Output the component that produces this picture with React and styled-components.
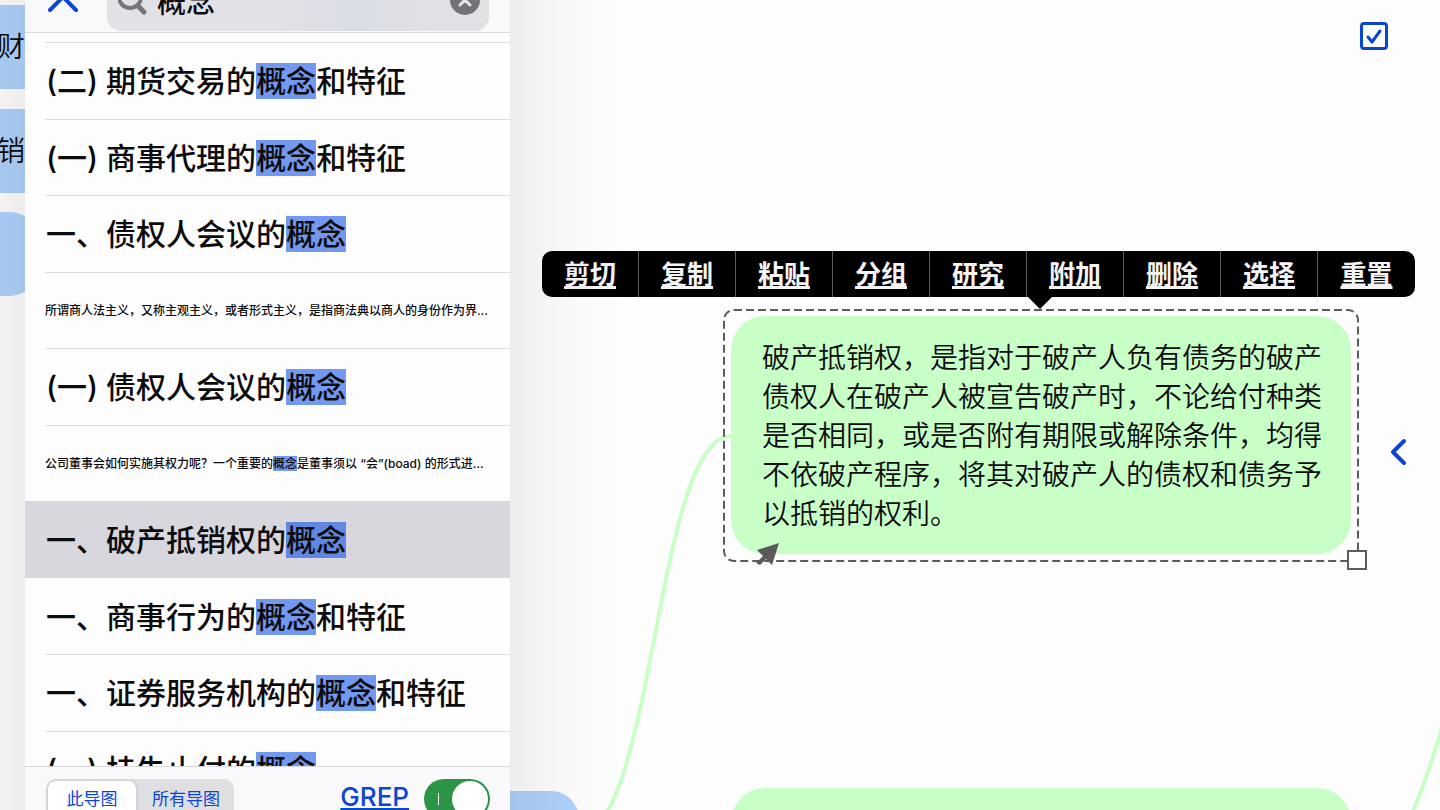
import React, { useState } from "react";
import styled, { createGlobalStyle } from "styled-components";

const BLUE = "#0b45d4";
const GREEN = "#c8ffc6";

const GlobalStyle = createGlobalStyle`
  *, *::before, *::after { box-sizing: border-box; }
  body { margin: 0; background: #fefdfe; }
  body, button, input {
    font-family: Inter, "Noto Sans CJK SC", sans-serif;
  }
`;

const Screen = styled.div`
  position: relative;
  height: 100vh;
  overflow: hidden;
  color: #0c0b0d;
`;

/* ---------- mind map canvas ---------- */

const Canvas = styled.main`
  position: absolute;
  inset: 0;
  overflow: hidden;
`;

const Links = styled.svg`
  position: absolute;
  left: 0;
  top: 0;
  overflow: visible;
  fill: none;
  stroke: ${GREEN};
  stroke-width: 4;
`;

const Node = styled.article`
  position: absolute;
  left: ${(p) => p.$x}px;
  top: ${(p) => p.$y}px;
  width: ${(p) => p.$w}px;
  height: ${(p) => p.$h}px;
  padding: 23px 28px 20px 31px;
  border-radius: ${(p) => (p.$tone === "blue" ? 28 : 34)}px;
  background: ${(p) => (p.$tone === "blue" ? "#afd2fb" : GREEN)};
  font-size: 28px;
  font-weight: 350;
  line-height: 39px;
  text-align: ${(p) => (p.$tone === "blue" ? "right" : "left")};

  p { margin: 0; }
`;

const Selection = styled.svg`
  position: absolute;
  left: 722px;
  top: 308px;
  overflow: visible;
`;

const ContextMenu = styled.div`
  position: absolute;
  left: 542px;
  top: 251px;
  display: flex;
  height: 46px;
  border-radius: 10px;
  background: #000;

  &::after {
    content: "";
    position: absolute;
    left: 486px;
    top: 100%;
    border: 12px solid transparent;
    border-top-color: #000;
    border-bottom: 0;
  }
`;

const MenuItem = styled.button`
  width: 97px;
  padding: 2px 0 0;
  border: 0;
  border-right: 1px solid #5b5a5e;
  background: none;
  color: #f4f3f6;
  font-size: 26px;
  font-weight: 700;
  line-height: 44px;
  text-decoration: underline;
  text-decoration-thickness: 3px;
  text-underline-offset: 2px;
  text-decoration-skip-ink: none;
  &:last-child { border-right: 0; }
`;

const SelectToggle = styled.input`
  position: absolute;
  right: 52px;
  top: 22px;
  width: 28px;
  height: 28px;
  margin: 0;
  appearance: none;
  border: 3px solid ${BLUE};
  border-radius: 4px;
`;

const SelectTick = styled.svg`
  position: absolute;
  right: 52px;
  top: 22px;
  pointer-events: none;
`;

const DrawerButton = styled.button`
  position: absolute;
  right: 29px;
  top: 436px;
  display: flex;
  padding: 0;
  border: 0;
  background: none;
`;

/* ---------- search panel ---------- */

const Panel = styled.aside`
  position: relative;
  isolation: isolate;
  display: flex;
  flex-direction: column;
  width: 485px;
  height: 100%;
  margin-left: 25px;

  &::before {
    content: "";
    position: absolute;
    z-index: -1;
    inset: -120px 0;
    background: #fefdfe;
    box-shadow: 0 0 110px rgba(0, 0, 0, 0.13);
  }
`;

const Header = styled.header`
  display: flex;
  flex: 0 0 33px;
  align-items: flex-end;
  gap: 29px;
  padding: 0 21px 1px 23px;
  overflow: hidden;
  border-bottom: 1px solid #d9d8dc;
  background: #f9f9fc;
`;

const CloseButton = styled.button`
  display: flex;
  align-items: center;
  height: 62px;
  padding: 0;
  border: 0;
  background: none;
`;

const SearchField = styled.label`
  display: flex;
  flex: 1;
  align-items: center;
  gap: 9px;
  min-width: 0;
  height: 60px;
  padding: 0 9px 0 11px;
  border-radius: 14px;
  background: linear-gradient(90deg, #e2e1e5 45%, #dadde6 65%, #e1e1e5 85%);

  svg { flex: none; }
`;

const SearchInput = styled.input`
  flex: 1;
  width: 0;
  min-width: 0;
  height: 60px;
  padding: 0 0 2px;
  border: 0;
  outline: 0;
  background: none;
  color: #0c0b0d;
  font-size: 29px;
  font-weight: 500;
`;

const ClearButton = styled.button`
  display: flex;
  padding: 0;
  border: 0;
  background: none;
`;

const Viewport = styled.div`
  flex: 1;
  min-height: 0;
  overflow: hidden;
`;

const Results = styled.ul`
  display: grid;
  grid-auto-rows: 1fr;
  height: 765px;
  margin: 9px 0 0;
  padding: 0;
  list-style: none;
`;

const Result = styled.li`
  display: flex;
  align-items: center;
  padding-left: 20px;
  background: ${(p) => (p.$selected ? "#d8d7de" : "transparent")};
`;

const ResultText = styled.div`
  flex: 1;
  display: flex;
  align-items: center;
  align-self: stretch;
  padding: ${(p) => (p.$small ? "2px 0 0" : "1px 0 0 1px")};
  border-top: 1px solid ${(p) => (p.$plain ? "transparent" : "#dcdbdf")};
  font-size: ${(p) => (p.$small ? 12 : 30)}px;
  font-weight: 500;
  line-height: ${(p) => (p.$small ? 16 : 40)}px;
  white-space: nowrap;
`;

const Hit = styled.mark`
  background: ${(p) => (p.$selected ? "#6088e3" : "#7398ef")};
  color: inherit;
`;

const Footer = styled.footer`
  display: flex;
  flex: 0 0 44px;
  align-items: flex-start;
  padding: 12px 20px 0 21px;
  overflow: hidden;
  border-top: 1px solid #d9d8dc;
  background: #f9f9fc;
`;

const Segments = styled.div`
  display: flex;
  height: 40px;
  margin-right: auto;
  padding: 2px;
  border-radius: 10px;
  background: #dfdee3;
`;

const Segment = styled.label`
  width: ${(p) => (p.$wide ? 96 : 88)}px;
  padding-left: ${(p) => (p.$wide ? 4 : 0)}px;
  border-radius: 8px;
  color: ${BLUE};
  font-size: 17px;
  line-height: 36px;
  text-align: center;

  &:has(input:checked) {
    background: #fff;
    box-shadow: 0 1px 4px rgba(0, 0, 0, 0.15);
  }
  input { position: absolute; opacity: 0; pointer-events: none; }
`;

const GrepLink = styled.a`
  margin-right: 15px;
  color: ${BLUE};
  font-size: 26px;
  font-weight: 500;
  line-height: 36px;
  text-decoration-thickness: 2px;
  text-underline-offset: 2px;
`;

const Switch = styled.input`
  position: relative;
  width: 66px;
  height: 40px;
  margin: 0;
  appearance: none;
  border-radius: 20px;
  background: #c9c8ce;
  &:checked { background: #2b9447; }

  &::before {
    content: "";
    position: absolute;
    left: 14px;
    top: 14px;
    width: 1px;
    height: 12px;
    background: #fff;
  }
  &::after {
    content: "";
    position: absolute;
    right: 2px;
    top: 2px;
    width: 36px;
    height: 36px;
    border-radius: 50%;
    background: #fff;
  }
`;

const RESULTS = [
  { before: "(二) 期货交易的", hit: "概念", after: "和特征" },
  { before: "(一) 商事代理的", hit: "概念", after: "和特征" },
  { before: "一、债权人会议的", hit: "概念" },
  {
    before: "所谓商人法主义，又称主观主义，或者形式主义，是指商法典以商人的身份作为界…",
    small: true,
  },
  { before: "(一) 债权人会议的", hit: "概念" },
  {
    before: "公司董事会如何实施其权力呢？一个重要的",
    hit: "概念",
    after: "是董事须以 “会”(boad) 的形式进…",
    small: true,
  },
  { before: "一、破产抵销权的", hit: "概念", selected: true },
  { before: "一、商事行为的", hit: "概念", after: "和特征" },
  { before: "一、证券服务机构的", hit: "概念", after: "和特征" },
  { before: "(一) 挂失止付的", hit: "概念" },
];

const MENU = ["剪切", "复制", "粘贴", "分组", "研究", "附加", "删除", "选择", "重置"];

function MindMap() {
  const [picked, setPicked] = useState(true);
  return (
    <Canvas>
      <Links width="1440" height="810" aria-hidden="true">
        <path d="M731 436C655 436 655 836 577 836" />
        <path d="M1412 814Q1430 770 1443 724" />
      </Links>
      <Node $tone="blue" $x={-380} $y={5} $w={433} $h={84}><p>财</p></Node>
      <Node $tone="blue" $x={-380} $y={109} $w={433} $h={84}><p>销</p></Node>
      <Node $tone="blue" $x={-380} $y={212} $w={418} $h={84} />
      <Node $tone="blue" $x={300} $y={791} $w={279} $h={84} />
      <Node $x={731} $y={316} $w={620} $h={238}>
        <p>
          破产抵销权，是指对于破产人负有债务的破产债权人在破产人被宣告破产时，不论给付种类是否相同，或是否附有期限或解除条件，均得不依破产程序，将其对破产人的债权和债务予以抵销的权利。
        </p>
      </Node>
      <Node $x={731} $y={788} $w={620} $h={238} />
      <Selection width="646" height="264" aria-hidden="true">
        <rect x="2" y="2" width="634" height="251" rx="10" fill="none" stroke="#5c5b5e" strokeWidth="2" strokeDasharray="8 4" />
        <rect x="626" y="243" width="18" height="18" fill="#fefdfe" stroke="#5c5b5e" strokeWidth="2" />
        <path d="M57 235L35 242L41 248L34 255L38 257L44 251L50 257Z" fill="#5a5a5a" />
      </Selection>
      <ContextMenu role="toolbar">
        {MENU.map((label) => (
          <MenuItem key={label} type="button">{label}</MenuItem>
        ))}
      </ContextMenu>
      <SelectToggle type="checkbox" aria-label="选择" checked={picked} onChange={() => setPicked(!picked)} />
      {picked && (
        <SelectTick width="28" height="28" fill="none" stroke={BLUE} strokeWidth="3" strokeLinecap="round" strokeLinejoin="round" aria-hidden="true">
          <path d="M8 15L12 20L20 9" />
        </SelectTick>
      )}
      <DrawerButton type="button" aria-label="展开">
        <svg width="22" height="32" fill="none" stroke={BLUE} strokeWidth="4" strokeLinecap="round" strokeLinejoin="round">
          <path d="M15 5L4 16L15 27" />
        </svg>
      </DrawerButton>
    </Canvas>
  );
}

function SearchPanel() {
  const [query, setQuery] = useState("概念");
  const [scope, setScope] = useState("this");
  const [grep, setGrep] = useState(true);
  return (
    <Panel>
      <Header>
        <CloseButton type="button" aria-label="关闭">
          <svg width="30" height="30" fill="none" stroke={BLUE} strokeWidth="4" strokeLinecap="round">
            <path d="M2 -1L28 25M28 -1L2 25" />
          </svg>
        </CloseButton>
        <SearchField>
          <svg width="30" height="30" fill="none" stroke="#77767a" strokeWidth="4" strokeLinecap="round" aria-hidden="true">
            <circle cx="12" cy="11" r="11" />
            <path d="M20 20L26 26" strokeWidth="5" />
          </svg>
          <SearchInput aria-label="搜索" value={query} onChange={(e) => setQuery(e.target.value)} />
          <ClearButton type="button" aria-label="清除" onClick={() => setQuery("")}>
            <svg width="30" height="30" fill="none" stroke="#e5e5e8" strokeWidth="3" strokeLinecap="round">
              <circle cx="15" cy="14" r="15" fill="#737276" stroke="none" />
              <path d="M10 9L20 19M20 9L10 19" />
            </svg>
          </ClearButton>
        </SearchField>
      </Header>
      <Viewport>
        <Results>
          {RESULTS.map((r, i) => (
            <Result key={r.before} $selected={r.selected}>
              <ResultText $small={r.small} $plain={r.selected || RESULTS[i - 1]?.selected}>
                <span>
                  {r.before}
                  {r.hit && <Hit $selected={r.selected}>{r.hit}</Hit>}
                  {r.after}
                </span>
              </ResultText>
            </Result>
          ))}
        </Results>
      </Viewport>
      <Footer>
        <Segments>
          <Segment>
            <input type="radio" name="scope" checked={scope === "this"} onChange={() => setScope("this")} />
            此导图
          </Segment>
          <Segment $wide>
            <input type="radio" name="scope" checked={scope === "all"} onChange={() => setScope("all")} />
            所有导图
          </Segment>
        </Segments>
        <GrepLink href="#grep">GREP</GrepLink>
        <Switch type="checkbox" aria-label="GREP" checked={grep} onChange={() => setGrep(!grep)} />
      </Footer>
    </Panel>
  );
}

export default function App() {
  return (
    <Screen>
      <GlobalStyle />
      <MindMap />
      <SearchPanel />
    </Screen>
  );
}
